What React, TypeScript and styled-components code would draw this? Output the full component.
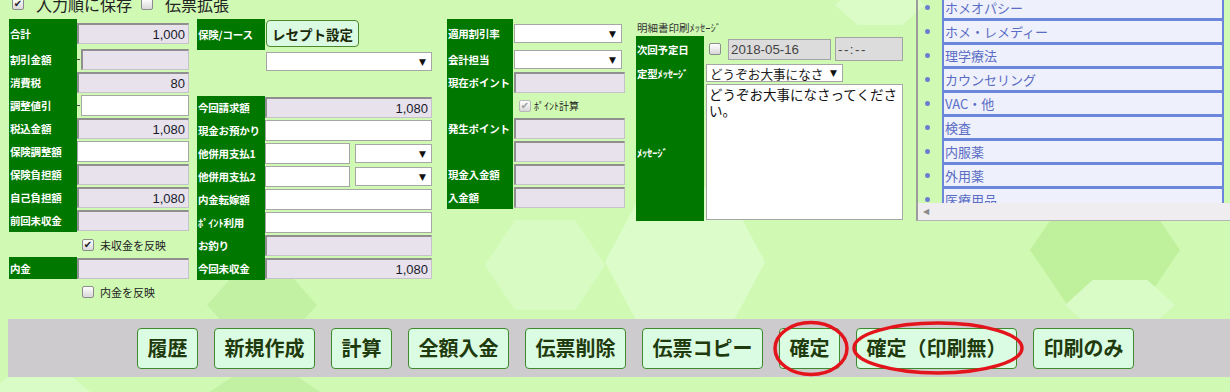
import React from 'react';
import styled, { createGlobalStyle } from 'styled-components';

const JP = `"Noto Sans CJK JP", "Noto Sans", sans-serif`;
const LATIN = `"Liberation Sans", "Noto Sans CJK JP", sans-serif`;
const GREEN = '#007800';
const PAGE_BG = '#d0fab4';

const GlobalStyle = createGlobalStyle`
  html, body { margin: 0; padding: 0; }
  body { background: ${PAGE_BG}; font-family: ${JP}; overflow: hidden; }
`;

const Page = styled.div`
  position: relative;
  width: 1230px;
  height: 392px;
  overflow: hidden;
  background: ${PAGE_BG};
`;

const Backdrop = styled.svg`
  position: absolute;
  left: 0;
  top: 0;
  z-index: 0;
  pointer-events: none;
`;

const Marks = styled.svg`
  position: absolute;
  left: 0;
  top: 0;
  z-index: 3;
  pointer-events: none;
`;

const Upper = styled.div`
  position: relative;
  z-index: 1;
  display: flex;
  height: 319px;
`;

const Main = styled.div`
  width: 903px;
  flex-shrink: 0;
  box-sizing: border-box;
  padding-left: 9px;
  display: flex;
  flex-direction: column;
`;

const Options = styled.div`
  display: flex;
  align-items: center;
  height: 20px;
  margin-top: -6px;
  padding-left: 3px;
  font-size: 16px;
  color: #222;
`;

const OptionItem = styled.label<{ $ml?: number }>`
  display: flex;
  align-items: center;
  gap: 12px;
  margin-left: ${(p) => p.$ml ?? 0}px;
`;

const Columns = styled.div`
  display: flex;
  align-items: flex-start;
  margin-top: 5px;
`;

const Column = styled.div<{ $w: number; $ml?: number }>`
  width: ${(p) => p.$w}px;
  margin-left: ${(p) => p.$ml ?? 0}px;
  flex-shrink: 0;
  display: flex;
  flex-direction: column;
`;

const Row = styled.div<{ $h?: number; $top?: boolean }>`
  display: flex;
  height: ${(p) => p.$h ?? 23}px;
  align-items: stretch;
`;

const Label = styled.div<{ $w?: number; $plain?: boolean }>`
  width: ${(p) => p.$w ?? 68}px;
  flex-shrink: 0;
  box-sizing: border-box;
  padding-left: 1px;
  background: ${(p) => (p.$plain ? 'transparent' : GREEN)};
  color: #fff;
  font-size: 10.5px;
  font-weight: 700;
  letter-spacing: -0.2px;
  white-space: nowrap;
  display: flex;
  align-items: center;
`;

const Field = styled.div<{ $pl?: number; $gap?: number; $top?: boolean }>`
  flex: 1;
  min-width: 0;
  display: flex;
  align-items: ${(p) => (p.$top ? 'flex-start' : 'center')};
  padding-left: ${(p) => p.$pl ?? 0}px;
  gap: ${(p) => p.$gap ?? 0}px;
`;

const TextBox = styled.input<{ $w?: number; $h?: number }>`
  box-sizing: border-box;
  flex: ${(p) => (p.$w ? `0 0 ${p.$w}px` : '1 1 0')};
  min-width: 0;
  width: ${(p) => (p.$w ? `${p.$w}px` : 'auto')};
  height: ${(p) => p.$h ?? 21}px;
  margin: 0;
  padding: 0 3px;
  border: 1px solid #a6a6a6;
  background: #fff;
  font: 13px ${LATIN};
  color: #1a1a2a;
  text-align: right;
  outline: none;
`;

const ReadOnlyBox = styled(TextBox)`
  background: #e7e2ec;
  border-color: #c6c2ca;
  border-top: 2px solid #8f8f8f;
  border-left: 2px solid #8f8f8f;
`;

const Dash = styled.span`
  width: 3px;
  height: 1px;
  margin-right: 1px;
  background: #444;
  flex-shrink: 0;
`;

const SelectBox = styled.div<{ $w?: number; $h?: number; $size?: number }>`
  box-sizing: border-box;
  flex: ${(p) => (p.$w ? `0 0 ${p.$w}px` : '1 1 0')};
  min-width: 0;
  height: ${(p) => p.$h ?? 19}px;
  border: 1px solid #a6a6a6;
  background: #fff;
  display: flex;
  align-items: center;
  padding: 0 5px 0 3px;
  font-size: ${(p) => p.$size ?? 13}px;
  color: #222;
  white-space: nowrap;
  overflow: hidden;
`;

const Arrow = styled.span`
  margin-left: auto;
  flex-shrink: 0;
  font: 9px "DejaVu Sans", sans-serif;
  color: #111;
`;

const CheckBox = styled.span<{ $disabled?: boolean }>`
  box-sizing: border-box;
  width: 12px;
  height: 12px;
  flex-shrink: 0;
  border: 1px solid ${(p) => (p.$disabled ? '#b8b8b8' : '#8c8c8c')};
  border-radius: 2px;
  background: linear-gradient(#ffffff, #d8d8d8);
  display: inline-flex;
  align-items: center;
  justify-content: center;
  font: 10px/1 "DejaVu Sans", sans-serif;
  color: ${(p) => (p.$disabled ? '#a0a0a0' : '#222')};
`;

const CheckLabel = styled.label<{ $pl?: number; $gap?: number; $size?: number }>`
  display: flex;
  align-items: center;
  padding-left: ${(p) => p.$pl ?? 0}px;
  gap: ${(p) => p.$gap ?? 6}px;
  font-size: ${(p) => p.$size ?? 11}px;
  color: #222;
  white-space: nowrap;
`;

const ReceiptButton = styled.button`
  box-sizing: border-box;
  width: 93px;
  height: 27px;
  margin: 1px 0 0;
  padding: 0;
  border: 1px solid #4a8a2e;
  border-radius: 4px;
  background: #dafbe2;
  font: 700 13.5px ${JP};
  color: #1a2a0a;
  white-space: nowrap;
`;

const HeadNote = styled.div`
  height: 17px;
  padding-left: 1px;
  display: flex;
  align-items: center;
  font-size: 10.5px;
  color: #333;
`;

const DateBox = styled.input<{ $w: number; $h: number; $spacing?: number }>`
  box-sizing: border-box;
  width: ${(p) => p.$w}px;
  height: ${(p) => p.$h}px;
  flex-shrink: 0;
  margin: 0;
  padding: 0 2px;
  border: 1px solid #a4a4a4;
  background: #dcdcdc;
  font: 13.3px ${LATIN};
  color: #444;
  letter-spacing: ${(p) => p.$spacing ?? 0}px;
  outline: none;
`;

const MessageArea = styled.textarea`
  box-sizing: border-box;
  width: 197px;
  height: 136px;
  margin: 0;
  padding: 1px 2px;
  resize: none;
  border: 1px solid #a6a6a6;
  background: #fff;
  font: 13.5px/16px ${JP};
  color: #111;
  overflow: hidden;
  outline: none;
`;

const ListPanel = styled.div`
  margin-left: 13px;
  width: 314px;
  height: 221px;
  flex-shrink: 0;
  box-sizing: border-box;
  border-left: 2px solid #9c9c9c;
  border-bottom: 1px solid #b4b4b4;
  display: flex;
  flex-direction: column;
`;

const ListViewport = styled.div`
  flex: 1;
  overflow: hidden;
`;

const MenuList = styled.ul`
  list-style: none;
  margin: -5px 0 0;
  padding: 0;
`;

const MenuItem = styled.li`
  display: flex;
  align-items: center;
  height: 24px;
`;

const Bullet = styled.span`
  width: 5px;
  height: 5px;
  border-radius: 50%;
  background: #6a7fd2;
  margin: 0 12px 0 7px;
  flex-shrink: 0;
`;

const MenuBox = styled.div`
  box-sizing: border-box;
  width: 282px;
  height: 24px;
  border: 2px solid #6c86dc;
  border-bottom-width: 1px;
  background: #eef1fb;
  padding-left: 1px;
  display: flex;
  align-items: center;
  font-size: 13px;
  color: #5a6cc4;
  white-space: nowrap;
`;

const HScroll = styled.div`
  height: 17px;
  flex-shrink: 0;
  background: #efedf0;
  display: flex;
  align-items: center;
  padding-left: 5px;
  font: 8px "DejaVu Sans", sans-serif;
  color: #8a8a8a;
`;

const Toolbar = styled.div`
  position: relative;
  z-index: 1;
  margin-left: 8px;
  height: 58px;
  background: #cecbce;
  display: flex;
  align-items: center;
  gap: 16px;
  padding-left: 129px;
`;

const ActionButton = styled.button`
  box-sizing: border-box;
  height: 41px;
  margin: 0;
  padding: 0 9.5px;
  border: 1px solid #3f8a2e;
  border-radius: 4px;
  background: #d9fce2;
  font: 700 20px/1 ${JP};
  color: #1f3a0c;
  white-space: nowrap;
`;

const hex = (cx: number, cy: number, w: number, h: number) =>
  [
    [cx - w / 2, cy],
    [cx - w / 4, cy - h / 2],
    [cx + w / 4, cy - h / 2],
    [cx + w / 2, cy],
    [cx + w / 4, cy + h / 2],
    [cx - w / 4, cy + h / 2],
  ]
    .map((pt) => pt.join(','))
    .join(' ');

const hexes = [
  { cx: 1105, cy: 250, w: 150, h: 110, fill: '#bff09b' },
  { cx: 685, cy: 262, w: 160, h: 150, fill: '#dcfcc9' },
  { cx: 262, cy: 305, w: 110, h: 62, fill: '#c3f1a3' },
  { cx: 265, cy: 395, w: 120, h: 40, fill: '#c3f1a3' },
  { cx: 545, cy: 265, w: 120, h: 90, fill: '#d8fbc4' },
  { cx: 1120, cy: 305, w: 110, h: 50, fill: '#d9fbc6' },
  { cx: 880, cy: 5, w: 90, h: 40, fill: '#dbfcc7' },
  { cx: 40, cy: 400, w: 120, h: 50, fill: '#d9fbc6' },
];

const menu = [
  'ホメオパシー',
  'ホメ・レメディー',
  '理学療法',
  'カウンセリング',
  'VAC・他',
  '検査',
  '内服薬',
  '外用薬',
  '医療用品',
];

const actions = [
  '履歴',
  '新規作成',
  '計算',
  '全額入金',
  '伝票削除',
  '伝票コピー',
  '確定',
  '確定（印刷無）',
  '印刷のみ',
];

const Select = ({ w, h, size, value }: { w?: number; h?: number; size?: number; value?: string }) => (
  <SelectBox $w={w} $h={h} $size={size}>
    {value}
    <Arrow>▼</Arrow>
  </SelectBox>
);

const Check = ({ on, disabled }: { on?: boolean; disabled?: boolean }) => (
  <CheckBox $disabled={disabled}>{on ? '✔' : ''}</CheckBox>
);

const Amount = ({ value }: { value?: string }) => (
  <ReadOnlyBox readOnly defaultValue={value ?? ''} />
);

const Blank = () => <TextBox defaultValue="" />;

export default function App() {
  return (
    <>
      <GlobalStyle />
      <Page>
        <Backdrop width={1230} height={392}>
          {hexes.map((h, i) => (
            <polygon key={i} points={hex(h.cx, h.cy, h.w, h.h)} fill={h.fill} />
          ))}
        </Backdrop>

        <Upper>
          <Main>
            <Options>
              <OptionItem>
                <Check on />
                入力順に保存
              </OptionItem>
              <OptionItem $ml={9}>
                <Check />
                伝票拡張
              </OptionItem>
            </Options>

            <Columns>
              <Column $w={180}>
                <Row $h={29}>
                  <Label>合計</Label>
                  <Field><Amount value="1,000" /></Field>
                </Row>
                <Row>
                  <Label>割引金額</Label>
                  <Field><Dash /><Amount /></Field>
                </Row>
                <Row>
                  <Label>消費税</Label>
                  <Field><Amount value="80" /></Field>
                </Row>
                <Row>
                  <Label>調整値引</Label>
                  <Field><Dash /><Blank /></Field>
                </Row>
                <Row>
                  <Label>税込金額</Label>
                  <Field><Amount value="1,080" /></Field>
                </Row>
                <Row>
                  <Label>保険調整額</Label>
                  <Field><Blank /></Field>
                </Row>
                <Row>
                  <Label>保険負担額</Label>
                  <Field><Amount /></Field>
                </Row>
                <Row>
                  <Label>自己負担額</Label>
                  <Field><Amount value="1,080" /></Field>
                </Row>
                <Row>
                  <Label>前回未収金</Label>
                  <Field><Amount /></Field>
                </Row>
                <Row $h={25}>
                  <Label $plain />
                  <Field>
                    <CheckLabel $pl={5}>
                      <Check on />
                      未収金を反映
                    </CheckLabel>
                  </Field>
                </Row>
                <Row $h={22}>
                  <Label>内金</Label>
                  <Field><Amount /></Field>
                </Row>
                <Row $h={26}>
                  <Label $plain />
                  <Field>
                    <CheckLabel $pl={5}>
                      <Check />
                      内金を反映
                    </CheckLabel>
                  </Field>
                </Row>
              </Column>

              <Column $w={235} $ml={8}>
                <Row $h={31}>
                  <Label>保険/コース</Label>
                  <Field $pl={1} $top>
                    <ReceiptButton>レセプト設定</ReceiptButton>
                  </Field>
                </Row>
                <Row>
                  <Label $plain />
                  <Field $pl={1}><Select /></Field>
                </Row>
                <Row />
                <Row>
                  <Label>今回請求額</Label>
                  <Field><Amount value="1,080" /></Field>
                </Row>
                <Row>
                  <Label>現金お預かり</Label>
                  <Field><Blank /></Field>
                </Row>
                <Row>
                  <Label>他併用支払1</Label>
                  <Field $gap={5}>
                    <TextBox $w={85} defaultValue="" />
                    <Select />
                  </Field>
                </Row>
                <Row>
                  <Label>他併用支払2</Label>
                  <Field $gap={5}>
                    <TextBox $w={85} defaultValue="" />
                    <Select />
                  </Field>
                </Row>
                <Row>
                  <Label>内金転嫁額</Label>
                  <Field><Blank /></Field>
                </Row>
                <Row>
                  <Label>ﾎﾟｲﾝﾄ利用</Label>
                  <Field><Blank /></Field>
                </Row>
                <Row>
                  <Label>お釣り</Label>
                  <Field><Amount /></Field>
                </Row>
                <Row>
                  <Label>今回未収金</Label>
                  <Field><Amount value="1,080" /></Field>
                </Row>
              </Column>

              <Column $w={178} $ml={15}>
                <Row $h={29}>
                  <Label $w={66}>適用割引率</Label>
                  <Field $pl={1}><Select w={108} /></Field>
                </Row>
                <Row>
                  <Label $w={66}>会計担当</Label>
                  <Field $pl={1}><Select w={108} /></Field>
                </Row>
                <Row>
                  <Label $w={66}>現在ポイント</Label>
                  <Field $pl={1}><Amount /></Field>
                </Row>
                <Row>
                  <Label $w={66} />
                  <Field>
                    <CheckLabel $pl={6} $gap={3} $size={10}>
                      <Check on disabled />
                      ﾎﾟｲﾝﾄ計算
                    </CheckLabel>
                  </Field>
                </Row>
                <Row>
                  <Label $w={66}>発生ポイント</Label>
                  <Field $pl={1}><Amount /></Field>
                </Row>
                <Row>
                  <Label $w={66} />
                  <Field $pl={1}><Amount /></Field>
                </Row>
                <Row>
                  <Label $w={66}>現金入金額</Label>
                  <Field $pl={1}><Amount /></Field>
                </Row>
                <Row>
                  <Label $w={66}>入金額</Label>
                  <Field $pl={1}><Amount /></Field>
                </Row>
              </Column>

              <Column $w={267} $ml={11}>
                <HeadNote>明細書印刷ﾒｯｾｰｼﾞ</HeadNote>
                <Row $h={26}>
                  <Label>次回予定日</Label>
                  <Field $pl={5}>
                    <Check />
                    <DateBox $w={103} $h={21} readOnly defaultValue="2018-05-16" style={{ marginLeft: 7 }} />
                    <DateBox $w={68} $h={24} $spacing={1.5} readOnly defaultValue="--:--" style={{ marginLeft: 4 }} />
                  </Field>
                </Row>
                <Row $h={22}>
                  <Label>定型ﾒｯｾｰｼﾞ</Label>
                  <Field $pl={2}>
                    <Select w={137} h={18} size={12.6} value="どうぞお大事になさ" />
                  </Field>
                </Row>
                <Row $h={137}>
                  <Label>ﾒｯｾｰｼﾞ</Label>
                  <Field $pl={2} $top>
                    <MessageArea defaultValue="どうぞお大事になさってください。" />
                  </Field>
                </Row>
              </Column>
            </Columns>
          </Main>

          <ListPanel>
            <ListViewport>
              <MenuList>
                {menu.map((m) => (
                  <MenuItem key={m}>
                    <Bullet />
                    <MenuBox>{m}</MenuBox>
                  </MenuItem>
                ))}
              </MenuList>
            </ListViewport>
            <HScroll>◀</HScroll>
          </ListPanel>
        </Upper>

        <Toolbar>
          {actions.map((a) => (
            <ActionButton key={a}>{a}</ActionButton>
          ))}
        </Toolbar>

        <Marks width={1230} height={392}>
          <ellipse cx={811} cy={348.5} rx={36} ry={26} fill="none" stroke="#e3141c" strokeWidth={3.5} />
          <ellipse cx={938} cy={348} rx={84} ry={25} fill="none" stroke="#e3141c" strokeWidth={3.5} />
        </Marks>
      </Page>
    </>
  );
}
